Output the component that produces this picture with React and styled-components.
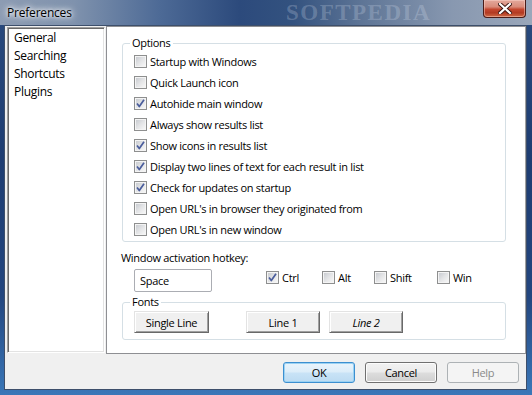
import styled, { createGlobalStyle } from "styled-components";

const Global = createGlobalStyle`
  html, body {
    margin: 0;
    padding: 0;
    width: 532px;
    height: 395px;
    overflow: hidden;
    background: #1f3e70;
  }
  * { box-sizing: border-box; }
  body {
    font-family: "Open Sans", "Noto Sans", "DejaVu Sans", sans-serif;
    font-size: 11px;
    letter-spacing: -0.3px;
    color: #000;
  }
`;

const Window = styled.div`
  position: relative;
  width: 532px;
  height: 395px;
  display: flex;
  flex-direction: column;
  padding: 0 5px 5px 4px;
  background: linear-gradient(
    180deg,
    #2a4b7e 0%,
    #1e3d72 40%,
    #23467f 75%,
    #3a77b8 100%
  );
`;

const TitleBar = styled.div`
  position: relative;
  height: 25px;
  margin: 0 -5px 0 -4px;
  padding: 0 0 0 7px;
  display: flex;
  align-items: center;
  overflow: hidden;
  background: linear-gradient(
    90deg,
    #8d9cb3 0%,
    #7f92ad 14%,
    #4d6a96 30%,
    #2c4a7c 45%,
    #33527f 55%,
    #5e7596 68%,
    #8898b0 85%,
    #9aa7ba 100%
  );
`;

const Title = styled.span`
  font-size: 12px;
  letter-spacing: -0.2px;
  margin-top: -1px;
  color: #000;
  text-shadow: 0 0 8px #fff, 0 0 6px rgba(255, 255, 255, 0.95),
    0 0 3px rgba(255, 255, 255, 0.9);
`;

const Watermark = styled.span`
  position: absolute;
  left: 286px;
  top: 1px;
  font-family: "Liberation Serif", "DejaVu Serif", serif;
  font-weight: bold;
  font-size: 23px;
  line-height: 23px;
  letter-spacing: 1.5px;
  color: rgba(225, 233, 246, 0.24);
  pointer-events: none;
`;

const CloseButton = styled.div`
  position: absolute;
  right: 6px;
  top: 0;
  width: 43px;
  height: 18px;
  border: 1px solid #4a1c18;
  border-top: none;
  border-radius: 0 0 4px 4px;
  background: linear-gradient(
    180deg,
    #e3a99c 0%,
    #d98b7a 40%,
    #c4472f 55%,
    #b23a22 75%,
    #cf6a45 100%
  );
  box-shadow: inset 0 0 0 1px rgba(255, 220, 210, 0.45);
  display: flex;
  align-items: center;
  justify-content: center;
`;

const Client = styled.div`
  flex: 1;
  display: flex;
  flex-direction: column;
  background: #f0f0f0;
  border: 1px solid #3d4f6b;
`;

const Body = styled.div`
  display: flex;
  gap: 1px;
  height: 328px;
`;

const NavList = styled.ul`
  list-style: none;
  margin: 1px 0 1px 2px;
  width: 98px;
  padding: 1px 6px;
  background: #fff;
  border: 1px solid;
  border-color: #a0a0a0 #fff #fff #a0a0a0;
  box-shadow: inset 1px 1px 0 #696969, inset -1px -1px 0 #e3e3e3;
`;

const NavItem = styled.li`
  height: 18px;
  line-height: 18px;
  font-size: 12px;
`;

const Panel = styled.div`
  flex: 1;
  background: #fff;
  border: 1px solid #8e8f93;
  border-right-color: #a0a0a0;
  padding: 8px 19px 0 15px;
  display: flex;
  flex-direction: column;
`;

const Group = styled.fieldset`
  margin: ${(p) => p.$top || 0}px 0 0 0;
  padding: 0 0 ${(p) => p.$bottom}px 11px;
  border: 1px solid #d5dfe5;
  border-radius: 3px;
  min-width: 0;
`;

const Legend = styled.legend`
  margin-left: -4px;
  padding: 0 2px;
  line-height: 16px;
`;

const Row = styled.label`
  display: flex;
  align-items: center;
  gap: 3px;
  height: ${(p) => p.$h || 21}px;
  width: ${(p) => (p.$w ? p.$w + "px" : "auto")};
  white-space: nowrap;
`;

const Box = styled.span`
  width: 13px;
  height: 13px;
  flex-shrink: 0;
  border: 1px solid #8e8f8f;
  padding: 1px;
  background: #f4f4f4;
  position: relative;
`;

const BoxFill = styled.span`
  display: block;
  width: 9px;
  height: 9px;
  background: linear-gradient(135deg, #c9ccd1 0%, #e3e4e6 50%, #f6f6f6 100%);
`;

const Tick = styled.svg`
  position: absolute;
  left: 0;
  top: 0;
`;

function Check({ checked, children, w, h }) {
  return (
    <Row $w={w} $h={h}>
      <Box>
        <BoxFill />
        {checked && (
          <Tick width="11" height="11" viewBox="0 0 11 11">
            <path
              d="M2 5.5 L4.3 8.6 L9 1.8"
              fill="none"
              stroke="#4a5d9c"
              strokeWidth="1.7"
              strokeLinejoin="round"
            />
          </Tick>
        )}
      </Box>
      <span>{children}</span>
    </Row>
  );
}

const HotkeyLabel = styled.div`
  margin-top: 8px;
  height: 16px;
  line-height: 16px;
  margin-left: -1px;
`;

const HotkeyRow = styled.div`
  display: flex;
  align-items: flex-start;
  margin-top: 3px;
  padding-left: 12px;
`;

const TextBox = styled.div`
  width: 78px;
  height: 23px;
  border: 1px solid #abadb3;
  border-radius: 2px;
  box-shadow: inset 0 0 0 1px #fff;
  padding: 3px 5px;
  line-height: 15px;
  margin-right: 54px;
`;

const ButtonRow = styled.div`
  display: flex;
  align-items: flex-start;
  height: 29px;
  padding-top: 1px;
`;

const ClassicButton = styled.div`
  width: ${(p) => p.$w}px;
  height: 22px;
  margin-right: ${(p) => p.$gap || 0}px;
  display: flex;
  align-items: center;
  justify-content: center;
  background: #f0f0f0;
  border: 1px solid;
  border-color: #e3e3e3 #696969 #696969 #e3e3e3;
  box-shadow: inset 1px 1px 0 #fff, inset -1px -1px 0 #a0a0a0;
  font-style: ${(p) => (p.$italic ? "italic" : "normal")};
`;

const Footer = styled.div`
  flex: 1;
  display: flex;
  justify-content: flex-end;
  align-items: flex-start;
  gap: 10px;
  padding: 8px 7px 0 0;
`;

const DialogButton = styled.div`
  width: 72px;
  height: 21px;
  border-radius: 3px;
  display: flex;
  align-items: center;
  justify-content: center;
  border: 1px solid
    ${(p) =>
      p.$variant === "default"
        ? "#3c8fd0"
        : p.$variant === "disabled"
        ? "#adb2b5"
        : "#707070"};
  color: ${(p) => (p.$variant === "disabled" ? "#8a8a8a" : "#000")};
  background: ${(p) =>
    p.$variant === "default"
      ? "linear-gradient(180deg, #eaf4fc 0%, #dcedf9 48%, #c9e3f6 52%, #bcdbf2 100%)"
      : p.$variant === "disabled"
      ? "#f4f4f4"
      : "linear-gradient(180deg, #f2f2f2 0%, #ebebeb 48%, #dddddd 52%, #cfcfcf 100%)"};
  box-shadow: ${(p) =>
    p.$variant === "disabled"
      ? "none"
      : p.$variant === "default"
      ? "inset 0 0 0 1px #9bd2f3"
      : "inset 0 0 0 1px #fcfcfc"};
`;

const options = [
  { label: "Startup with Windows", checked: false },
  { label: "Quick Launch icon", checked: false },
  { label: "Autohide main window", checked: true },
  { label: "Always show results list", checked: false },
  { label: "Show icons in results list", checked: true },
  { label: "Display two lines of text for each result in list", checked: true },
  { label: "Check for updates on startup", checked: true },
  { label: "Open URL's in browser they originated from", checked: false },
  { label: "Open URL's in new window", checked: false },
];

const modifiers = [
  { label: "Ctrl", checked: true, w: 56 },
  { label: "Alt", checked: false, w: 52 },
  { label: "Shift", checked: false, w: 63 },
  { label: "Win", checked: false, w: 50 },
];

export default function App() {
  return (
    <>
      <Global />
      <Window>
        <TitleBar>
          <Title>Preferences</Title>
          <Watermark>SOFTPEDIA</Watermark>
          <CloseButton>
            <svg width="14" height="11" viewBox="0 0 14 11">
              <path
                d="M2 1 L12 10 M12 1 L2 10"
                stroke="#3a1410"
                strokeWidth="4"
                strokeLinecap="square"
              />
              <path
                d="M2 1 L12 10 M12 1 L2 10"
                stroke="#fff"
                strokeWidth="2.2"
                strokeLinecap="square"
              />
            </svg>
          </CloseButton>
        </TitleBar>
        <Client>
          <Body>
            <NavList>
              <NavItem>General</NavItem>
              <NavItem>Searching</NavItem>
              <NavItem>Shortcuts</NavItem>
              <NavItem>Plugins</NavItem>
            </NavList>
            <Panel>
              <Group $bottom={1}>
                <Legend>Options</Legend>
                {options.map((o) => (
                  <Check key={o.label} checked={o.checked}>
                    {o.label}
                  </Check>
                ))}
              </Group>
              <HotkeyLabel>Window activation hotkey:</HotkeyLabel>
              <HotkeyRow>
                <TextBox>Space</TextBox>
                {modifiers.map((m) => (
                  <Check key={m.label} checked={m.checked} w={m.w} h={17}>
                    {m.label}
                  </Check>
                ))}
              </HotkeyRow>
              <Group $bottom={0} $top={2}>
                <Legend>Fonts</Legend>
                <ButtonRow>
                  <ClassicButton $w={75} $gap={37}>
                    Single Line
                  </ClassicButton>
                  <ClassicButton $w={74} $gap={9}>
                    Line 1
                  </ClassicButton>
                  <ClassicButton $w={74} $italic>
                    Line 2
                  </ClassicButton>
                </ButtonRow>
              </Group>
            </Panel>
          </Body>
          <Footer>
            <DialogButton $variant="default">OK</DialogButton>
            <DialogButton>Cancel</DialogButton>
            <DialogButton $variant="disabled">Help</DialogButton>
          </Footer>
        </Client>
      </Window>
    </>
  );
}
